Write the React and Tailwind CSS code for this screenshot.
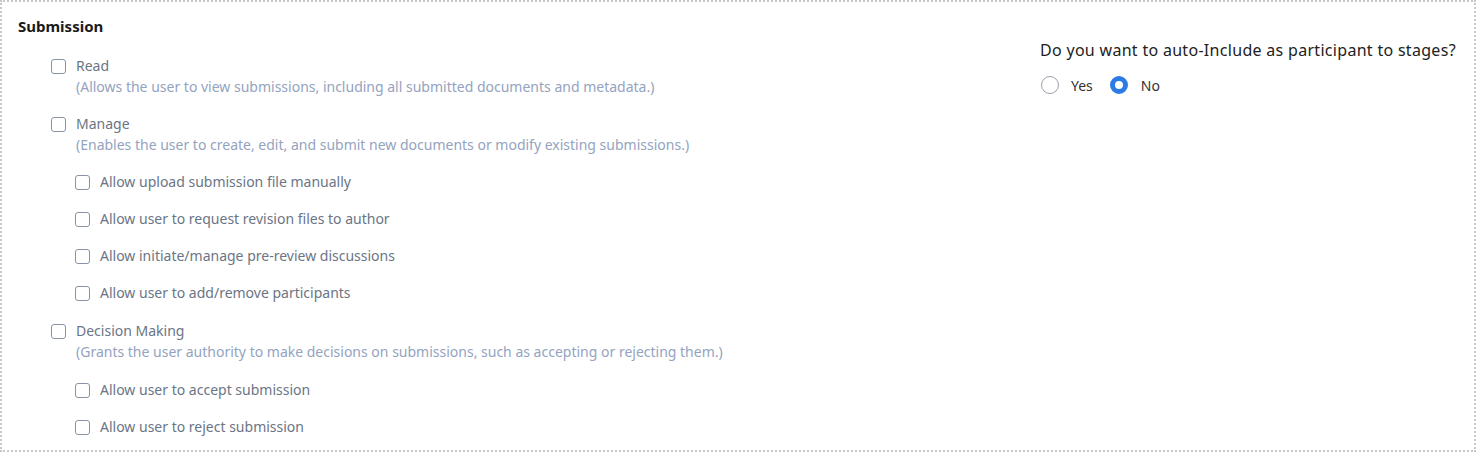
import React from "react";

function Box() {
  return (
    <span className="inline-block w-[15px] h-[15px] shrink-0 rounded-[3px] border border-[#8a93a6] bg-white" />
  );
}

function Item({ label, desc }) {
  return (
    <div className="flex items-start">
      <div className="h-[20px] flex items-center">
        <Box />
      </div>
      <div className="ml-[10px]">
        <div className="h-[20px] leading-[20px] text-[14px] text-[#6b7585]">{label}</div>
        <div className="mt-[1px] h-[20px] leading-[20px] text-[14px] text-[#94a3c0]">{desc}</div>
      </div>
    </div>
  );
}

function Sub({ label }) {
  return (
    <div className="flex items-center h-[20px]">
      <Box />
      <span className="ml-[10px] text-[14px] text-[#6b7585] leading-[20px]">{label}</span>
    </div>
  );
}

export default function App() {
  return (
    <div className="w-[1479px] h-[453px] bg-white" style={{ fontFamily: "'Noto Sans', sans-serif" }}>
      <div className="w-[1476px] h-[452px] border-2 border-dotted border-[#c8c8c8] flex">
        <div className="flex-1 pl-[16px] pt-[14px]">
          <div className="text-[15px] font-bold text-[#1a1a1a] leading-[20px]">Submission</div>
          <div className="pl-[33px] mt-[20px] flex flex-col">
            <Item label="Read" desc="(Allows the user to view submissions, including all submitted documents and metadata.)" />
            <div className="mt-[17px]">
              <Item label="Manage" desc="(Enables the user to create, edit, and submit new documents or modify existing submissions.)" />
            </div>
            <div className="pl-[24px] mt-[17px] flex flex-col gap-[17px]">
              <Sub label="Allow upload submission file manually" />
              <Sub label="Allow user to request revision files to author" />
              <Sub label="Allow initiate/manage pre-review discussions" />
              <Sub label="Allow user to add/remove participants" />
            </div>
            <div className="mt-[18px]">
              <Item label="Decision Making" desc="(Grants the user authority to make decisions on submissions, such as accepting or rejecting them.)" />
            </div>
            <div className="pl-[24px] mt-[18px] flex flex-col gap-[17px]">
              <Sub label="Allow user to accept submission" />
              <Sub label="Allow user to reject submission" />
            </div>
          </div>
        </div>
        <div className="w-[436px] pt-[37px] pl-[2px]">
          <div className="text-[16px] tracking-[0.3px] text-[#222] leading-[22px]">Do you want to auto-Include as participant to stages?</div>
          <div className="mt-[14px] flex items-center h-[20px] pl-[1px]">
            <span className="inline-block w-[18px] h-[18px] rounded-full border border-[#9aa0ac] bg-white" />
            <span className="ml-[12px] text-[14px] text-[#333]">Yes</span>
            <span className="ml-[17px] inline-block w-[18px] h-[18px] rounded-full border-[5px] border-[#2c7be5] bg-white" />
            <span className="ml-[13px] text-[14px] text-[#333]">No</span>
          </div>
        </div>
      </div>
    </div>
  );
}
